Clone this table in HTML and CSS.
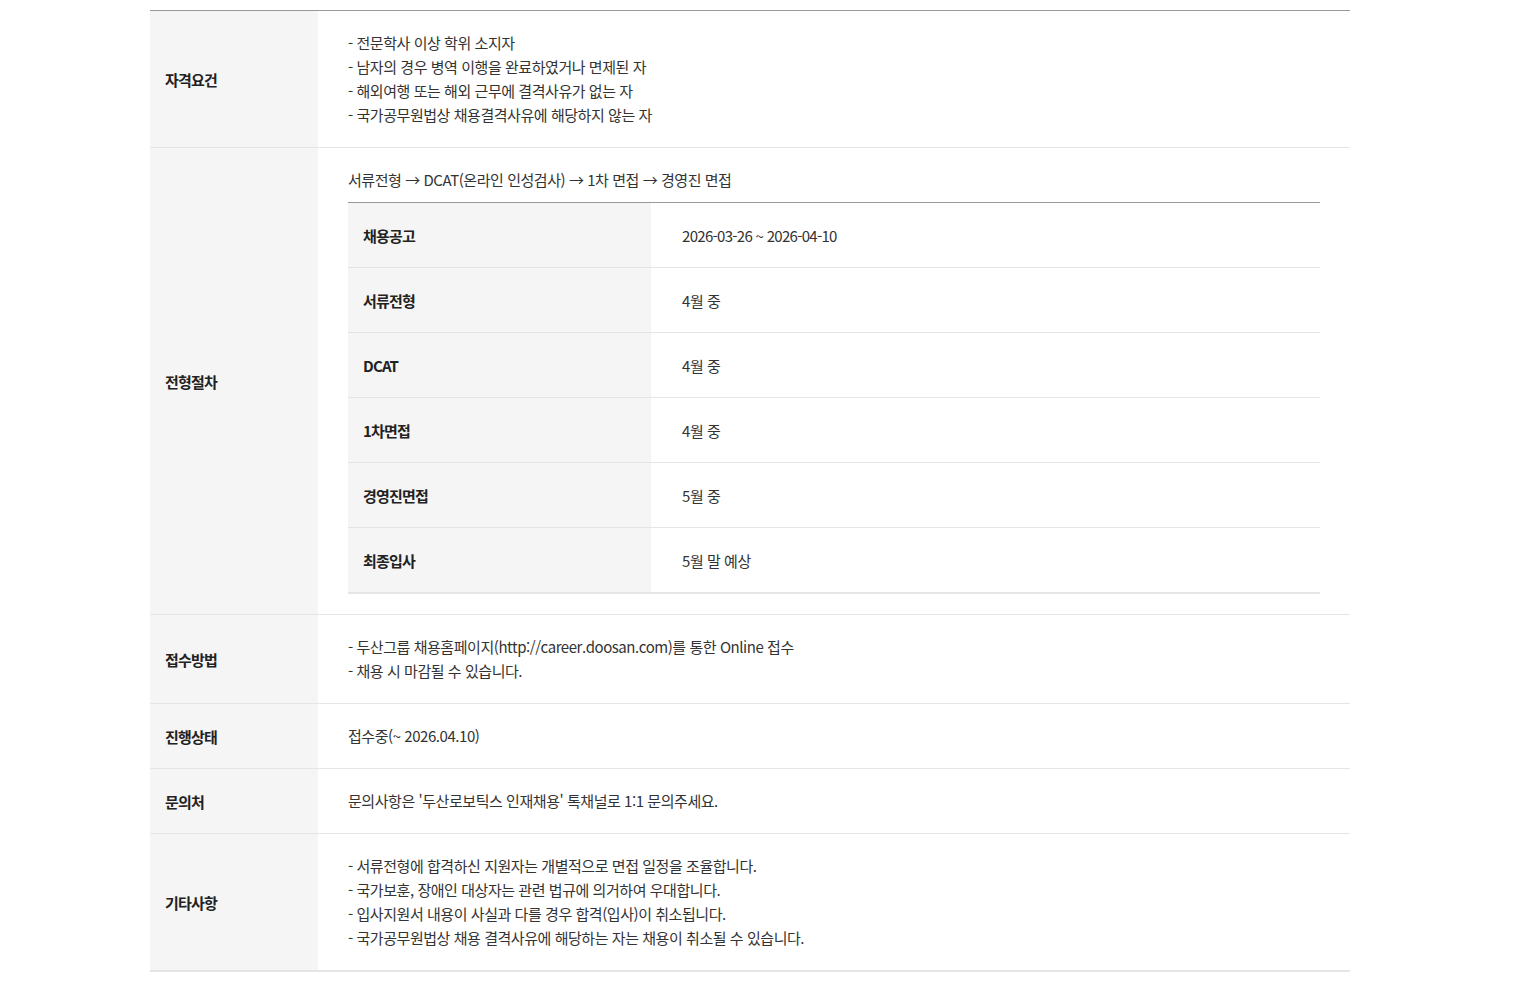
FILE: index.html
```html
<!DOCTYPE html>
<html lang="ko">
<head>
<meta charset="utf-8">
<title>채용 안내</title>
<link rel="stylesheet" href="styles.css">
</head>
<body>
<div class="info">
  <div class="row">
    <div class="th">자격요건</div>
    <div class="td">
      <p>- 전문학사 이상 학위 소지자</p>
      <p>- 남자의 경우 병역 이행을 완료하였거나 면제된 자</p>
      <p>- 해외여행 또는 해외 근무에 결격사유가 없는 자</p>
      <p>- 국가공무원법상 채용결격사유에 해당하지 않는 자</p>
    </div>
  </div>
  <div class="row">
    <div class="th">전형절차</div>
    <div class="td">
      <p>서류전형 → DCAT(온라인 인성검사) → 1차 면접 → 경영진 면접</p>
      <div class="steps">
        <div class="step"><div class="sk">채용공고</div><div class="sv num">2026-03-26 ~ 2026-04-10</div></div>
        <div class="step"><div class="sk">서류전형</div><div class="sv">4월 중</div></div>
        <div class="step"><div class="sk">DCAT</div><div class="sv">4월 중</div></div>
        <div class="step"><div class="sk">1차면접</div><div class="sv">4월 중</div></div>
        <div class="step"><div class="sk">경영진면접</div><div class="sv">5월 중</div></div>
        <div class="step"><div class="sk">최종입사</div><div class="sv">5월 말 예상</div></div>
      </div>
    </div>
  </div>
  <div class="row">
    <div class="th">접수방법</div>
    <div class="td">
      <p>- 두산그룹 채용홈페이지(http://career.doosan.com)를 통한 Online 접수</p>
      <p>- 채용 시 마감될 수 있습니다.</p>
    </div>
  </div>
  <div class="row">
    <div class="th">진행상태</div>
    <div class="td"><p>접수중(~ 2026.04.10)</p></div>
  </div>
  <div class="row">
    <div class="th">문의처</div>
    <div class="td"><p>문의사항은 '두산로보틱스 인재채용' 톡채널로 1:1 문의주세요.</p></div>
  </div>
  <div class="row last">
    <div class="th">기타사항</div>
    <div class="td">
      <p>- 서류전형에 합격하신 지원자는 개별적으로 면접 일정을 조율합니다.</p>
      <p>- 국가보훈, 장애인 대상자는 관련 법규에 의거하여 우대합니다.</p>
      <p>- 입사지원서 내용이 사실과 다를 경우 합격(입사)이 취소됩니다.</p>
      <p>- 국가공무원법상 채용 결격사유에 해당하는 자는 채용이 취소될 수 있습니다.</p>
    </div>
  </div>
</div>
</body>
</html>
```
FILE: styles.css
```css
html, body {
  margin: 0;
  padding: 0;
  background: #fff;
}
body {
  padding-top: 10px;
  font-family: "Noto Sans CJK KR", "Noto Sans", sans-serif;
  font-size: 15px;
  color: #333;
  letter-spacing: -0.45px;
}
.info {
  width: 1200px;
  margin-left: 150px;
  border-top: 1px solid #999;
}
.row {
  display: flex;
  border-bottom: 1px solid #e5e5e5;
}
.row.last {
  border-bottom: 2px solid #e5e5e5;
}
.th {
  width: 153px;
  flex: none;
  padding-left: 15px;
  background: #f5f5f5;
  display: flex;
  align-items: center;
  font-weight: 700;
  color: #222;
  letter-spacing: -0.8px;
}
.td {
  flex: 1;
  padding: 20px 30px;
}
.td p {
  margin: 0;
  line-height: 24px;
}
.steps {
  margin-top: 10px;
  border-top: 1px solid #999;
  border-bottom: 2px solid #e5e5e5;
}
.step {
  display: flex;
  height: 64px;
  border-bottom: 1px solid #e5e5e5;
}
.step:last-child {
  border-bottom: none;
}
.sk {
  width: 288px;
  flex: none;
  padding-left: 15px;
  background: #f5f5f5;
  display: flex;
  align-items: center;
  font-weight: 700;
  color: #222;
  letter-spacing: -0.8px;
}
.sv {
  flex: 1;
  padding-left: 31px;
  display: flex;
  align-items: center;
}
.sv.num {
  letter-spacing: -0.7px;
}
```
